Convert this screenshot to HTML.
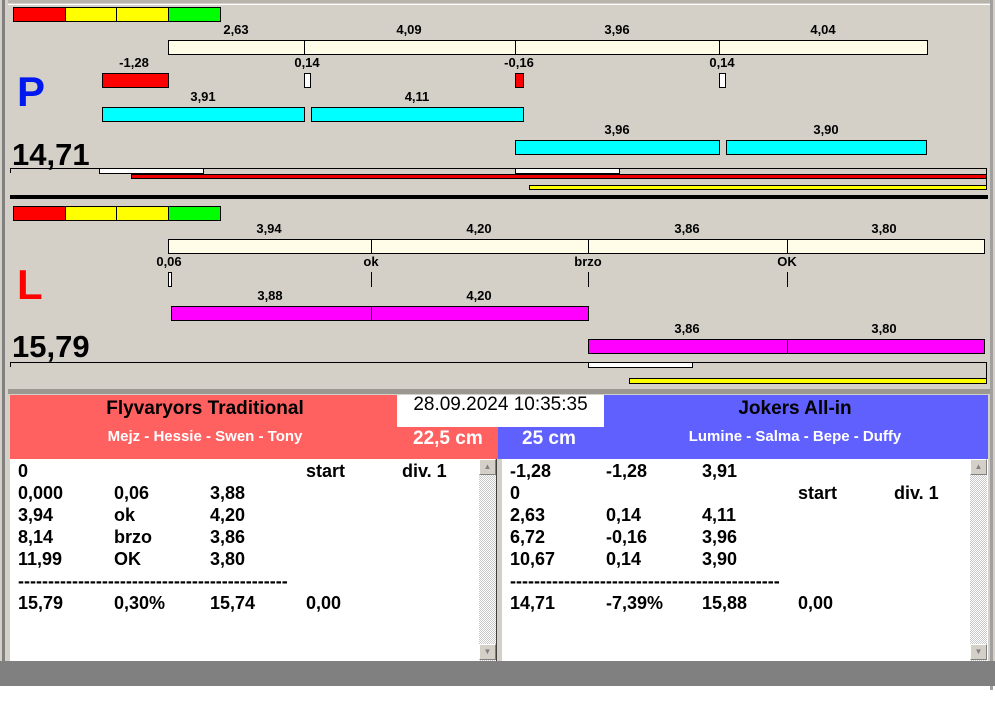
<!DOCTYPE html>
<html><head><meta charset="utf-8"><style>
*{margin:0;padding:0;box-sizing:border-box}
body{width:995px;height:716px;background:#fff;position:relative;overflow:hidden;font-family:"Liberation Sans",Arial,sans-serif}
div{position:absolute}
.b{border:1px solid #000}
.l{font-size:13px;font-weight:bold;color:#000;width:80px;text-align:center;margin-left:-40px;line-height:14px}
.t{font-size:18px;font-weight:bold;line-height:22px;color:#000;white-space:pre}
.v{width:1px;background:#000}
</style></head><body>
<div style="left:0;top:0;width:995px;height:686px;background:#d4d0c8"></div>
<div style="left:2px;top:0;width:3px;height:686px;background:#808080"></div>
<div style="left:990px;top:0;width:3px;height:690px;background:#a0a0a0"></div>
<div style="left:0;top:661px;width:995px;height:25px;background:#808080"></div>
<div style="left:8px;top:4px;width:982px;height:1px;background:#fff"></div>
<div style="left:8px;top:0;width:982px;height:3px;background:#b8b4ac"></div>
<!-- P panel -->
<div class="b" style="left:13px;top:7px;width:53px;height:15px;background:#f00"></div>
<div class="b" style="left:65px;top:7px;width:52px;height:15px;background:#ff0"></div>
<div class="b" style="left:116px;top:7px;width:53px;height:15px;background:#ff0"></div>
<div class="b" style="left:168px;top:7px;width:53px;height:15px;background:#0f0"></div>
<div class="l" style="left:236px;top:23px">2,63</div>
<div class="l" style="left:409px;top:23px">4,09</div>
<div class="l" style="left:617px;top:23px">3,96</div>
<div class="l" style="left:823px;top:23px">4,04</div>
<div class="b" style="left:168px;top:40px;width:760px;height:15px;background:#fffce8"></div>
<div class="v" style="left:304px;top:40px;height:15px"></div>
<div class="v" style="left:515px;top:40px;height:15px"></div>
<div class="v" style="left:719px;top:40px;height:15px"></div>
<div class="l" style="left:134px;top:56px">-1,28</div>
<div class="l" style="left:307px;top:56px">0,14</div>
<div class="l" style="left:519px;top:56px">-0,16</div>
<div class="l" style="left:722px;top:56px">0,14</div>
<div class="b" style="left:102px;top:73px;width:67px;height:15px;background:#f00"></div>
<div class="b" style="left:304px;top:73px;width:7px;height:15px;background:#fff"></div>
<div class="b" style="left:515px;top:73px;width:9px;height:15px;background:#f00"></div>
<div class="b" style="left:719px;top:73px;width:7px;height:15px;background:#fff"></div>
<div style="left:17px;top:69px;font-size:42px;font-weight:bold;color:#0018f0;line-height:46px">P</div>
<div class="l" style="left:203px;top:90px">3,91</div>
<div class="l" style="left:417px;top:90px">4,11</div>
<div class="b" style="left:102px;top:107px;width:203px;height:15px;background:#0ff"></div>
<div class="b" style="left:311px;top:107px;width:213px;height:15px;background:#0ff"></div>
<div class="l" style="left:617px;top:123px">3,96</div>
<div class="l" style="left:826px;top:123px">3,90</div>
<div class="b" style="left:515px;top:140px;width:205px;height:15px;background:#0ff"></div>
<div class="b" style="left:726px;top:140px;width:201px;height:15px;background:#0ff"></div>
<div style="left:12px;top:137px;font-size:31px;font-weight:bold;line-height:36px">14,71</div>
<div style="left:10px;top:168px;width:977px;height:1px;background:#000"></div>
<div class="v" style="left:10px;top:168px;height:5px"></div>
<div class="v" style="left:986px;top:168px;height:22px"></div>
<div class="b" style="left:99px;top:168px;width:105px;height:6px;background:#fff"></div>
<div class="b" style="left:515px;top:168px;width:105px;height:6px;background:#fff"></div>
<div class="b" style="left:131px;top:174px;width:856px;height:5px;background:#e00"></div>
<div class="b" style="left:529px;top:185px;width:458px;height:5px;background:#ff0"></div>
<div style="left:10px;top:195px;width:978px;height:4px;background:#000"></div>
<!-- L panel -->
<div class="b" style="left:13px;top:206px;width:53px;height:15px;background:#f00"></div>
<div class="b" style="left:65px;top:206px;width:52px;height:15px;background:#ff0"></div>
<div class="b" style="left:116px;top:206px;width:53px;height:15px;background:#ff0"></div>
<div class="b" style="left:168px;top:206px;width:53px;height:15px;background:#0f0"></div>
<div class="l" style="left:269px;top:222px">3,94</div>
<div class="l" style="left:479px;top:222px">4,20</div>
<div class="l" style="left:687px;top:222px">3,86</div>
<div class="l" style="left:884px;top:222px">3,80</div>
<div class="b" style="left:168px;top:239px;width:817px;height:15px;background:#fffce8"></div>
<div class="v" style="left:371px;top:239px;height:15px"></div>
<div class="v" style="left:588px;top:239px;height:15px"></div>
<div class="v" style="left:787px;top:239px;height:15px"></div>
<div class="l" style="left:169px;top:255px">0,06</div>
<div class="l" style="left:371px;top:255px">ok</div>
<div class="l" style="left:588px;top:255px">brzo</div>
<div class="l" style="left:787px;top:255px">OK</div>
<div class="b" style="left:168px;top:272px;width:4px;height:15px;background:#fff"></div>
<div class="v" style="left:371px;top:272px;height:15px"></div>
<div class="v" style="left:588px;top:272px;height:15px"></div>
<div class="v" style="left:787px;top:272px;height:15px"></div>
<div style="left:17px;top:262px;font-size:42px;font-weight:bold;color:#f00;line-height:46px">L</div>
<div class="l" style="left:270px;top:289px">3,88</div>
<div class="l" style="left:479px;top:289px">4,20</div>
<div class="b" style="left:171px;top:306px;width:418px;height:15px;background:#f0f"></div>
<div class="v" style="left:371px;top:306px;height:15px"></div>
<div class="l" style="left:687px;top:322px">3,86</div>
<div class="l" style="left:884px;top:322px">3,80</div>
<div class="b" style="left:588px;top:339px;width:397px;height:15px;background:#f0f"></div>
<div class="v" style="left:787px;top:339px;height:15px"></div>
<div style="left:12px;top:329px;font-size:31px;font-weight:bold;line-height:36px">15,79</div>
<div style="left:10px;top:362px;width:977px;height:1px;background:#000"></div>
<div class="v" style="left:10px;top:362px;height:5px"></div>
<div class="v" style="left:986px;top:362px;height:22px"></div>
<div class="b" style="left:588px;top:362px;width:105px;height:6px;background:#fff"></div>
<div class="b" style="left:629px;top:378px;width:358px;height:6px;background:#ff0"></div>
<div style="left:8px;top:389px;width:982px;height:5px;background:#9a9890"></div>
<!-- headers -->
<div style="left:10px;top:395px;width:489px;height:64px;background:#ff6060"></div>
<div style="left:498px;top:395px;width:490px;height:64px;background:#6060ff"></div>
<div style="left:397px;top:395px;width:207px;height:32px;background:#fff;font-size:19px;line-height:20px;padding-top:0;text-align:center;color:#000">28.09.2024 10:35:35</div>
<div style="left:10px;top:398px;width:390px;text-align:center;font-size:19px;font-weight:bold;line-height:22px">Flyvaryors Traditional</div>
<div style="left:10px;top:428px;width:390px;text-align:center;font-size:15px;font-weight:bold;color:#fff;line-height:18px">Mejz - Hessie - Swen - Tony</div>
<div style="left:413px;top:428px;font-size:19px;font-weight:bold;color:#fff;line-height:22px">22,5 cm</div>
<div style="left:522px;top:428px;font-size:19px;font-weight:bold;color:#fff;line-height:22px">25 cm</div>
<div style="left:600px;top:398px;width:390px;text-align:center;font-size:19px;font-weight:bold;line-height:22px">Jokers All-in</div>
<div style="left:600px;top:428px;width:390px;text-align:center;font-size:15px;font-weight:bold;color:#fff;line-height:18px">Lumine - Salma - Bepe - Duffy</div>
<!-- text boxes -->
<div style="left:10px;top:459px;width:487px;height:202px;background:#fff;border-right:1px solid #404040"></div>
<div style="left:479px;top:459px;width:17px;height:202px;background:repeating-conic-gradient(#fff 0 25%,#c8c8c8 0 50%) 0 0/2px 2px"></div>
<div style="left:479px;top:459px;width:17px;height:16px;background:#d4d0c8;border:1px solid;border-color:#fff #808080 #808080 #fff;font-size:8px;color:#808080;text-align:center;line-height:14px">▲</div>
<div style="left:479px;top:644px;width:17px;height:16px;background:#d4d0c8;border:1px solid;border-color:#fff #808080 #808080 #fff;font-size:8px;color:#808080;text-align:center;line-height:14px">▼</div>
<div style="left:502px;top:459px;width:486px;height:202px;background:#fff"></div>
<div style="left:970px;top:459px;width:17px;height:202px;background:repeating-conic-gradient(#fff 0 25%,#c8c8c8 0 50%) 0 0/2px 2px"></div>
<div style="left:970px;top:459px;width:17px;height:16px;background:#d4d0c8;border:1px solid;border-color:#fff #808080 #808080 #fff;font-size:8px;color:#808080;text-align:center;line-height:14px">▲</div>
<div style="left:970px;top:644px;width:17px;height:16px;background:#d4d0c8;border:1px solid;border-color:#fff #808080 #808080 #fff;font-size:8px;color:#808080;text-align:center;line-height:14px">▼</div>
<div class="t" style="left:18px;top:460px">0</div><div class="t" style="left:306px;top:460px">start</div><div class="t" style="left:402px;top:460px">div. 1</div>
<div class="t" style="left:18px;top:482px">0,000</div><div class="t" style="left:114px;top:482px">0,06</div><div class="t" style="left:210px;top:482px">3,88</div>
<div class="t" style="left:18px;top:504px">3,94</div><div class="t" style="left:114px;top:504px">ok</div><div class="t" style="left:210px;top:504px">4,20</div>
<div class="t" style="left:18px;top:526px">8,14</div><div class="t" style="left:114px;top:526px">brzo</div><div class="t" style="left:210px;top:526px">3,86</div>
<div class="t" style="left:18px;top:548px">11,99</div><div class="t" style="left:114px;top:548px">OK</div><div class="t" style="left:210px;top:548px">3,80</div>
<div class="t" style="left:18px;top:570px">---------------------------------------------</div>
<div class="t" style="left:18px;top:592px">15,79</div><div class="t" style="left:114px;top:592px">0,30%</div><div class="t" style="left:210px;top:592px">15,74</div><div class="t" style="left:306px;top:592px">0,00</div>
<div class="t" style="left:510px;top:460px">-1,28</div><div class="t" style="left:606px;top:460px">-1,28</div><div class="t" style="left:702px;top:460px">3,91</div>
<div class="t" style="left:510px;top:482px">0</div><div class="t" style="left:798px;top:482px">start</div><div class="t" style="left:894px;top:482px">div. 1</div>
<div class="t" style="left:510px;top:504px">2,63</div><div class="t" style="left:606px;top:504px">0,14</div><div class="t" style="left:702px;top:504px">4,11</div>
<div class="t" style="left:510px;top:526px">6,72</div><div class="t" style="left:606px;top:526px">-0,16</div><div class="t" style="left:702px;top:526px">3,96</div>
<div class="t" style="left:510px;top:548px">10,67</div><div class="t" style="left:606px;top:548px">0,14</div><div class="t" style="left:702px;top:548px">3,90</div>
<div class="t" style="left:510px;top:570px">---------------------------------------------</div>
<div class="t" style="left:510px;top:592px">14,71</div><div class="t" style="left:606px;top:592px">-7,39%</div><div class="t" style="left:702px;top:592px">15,88</div><div class="t" style="left:798px;top:592px">0,00</div>
</body></html>
